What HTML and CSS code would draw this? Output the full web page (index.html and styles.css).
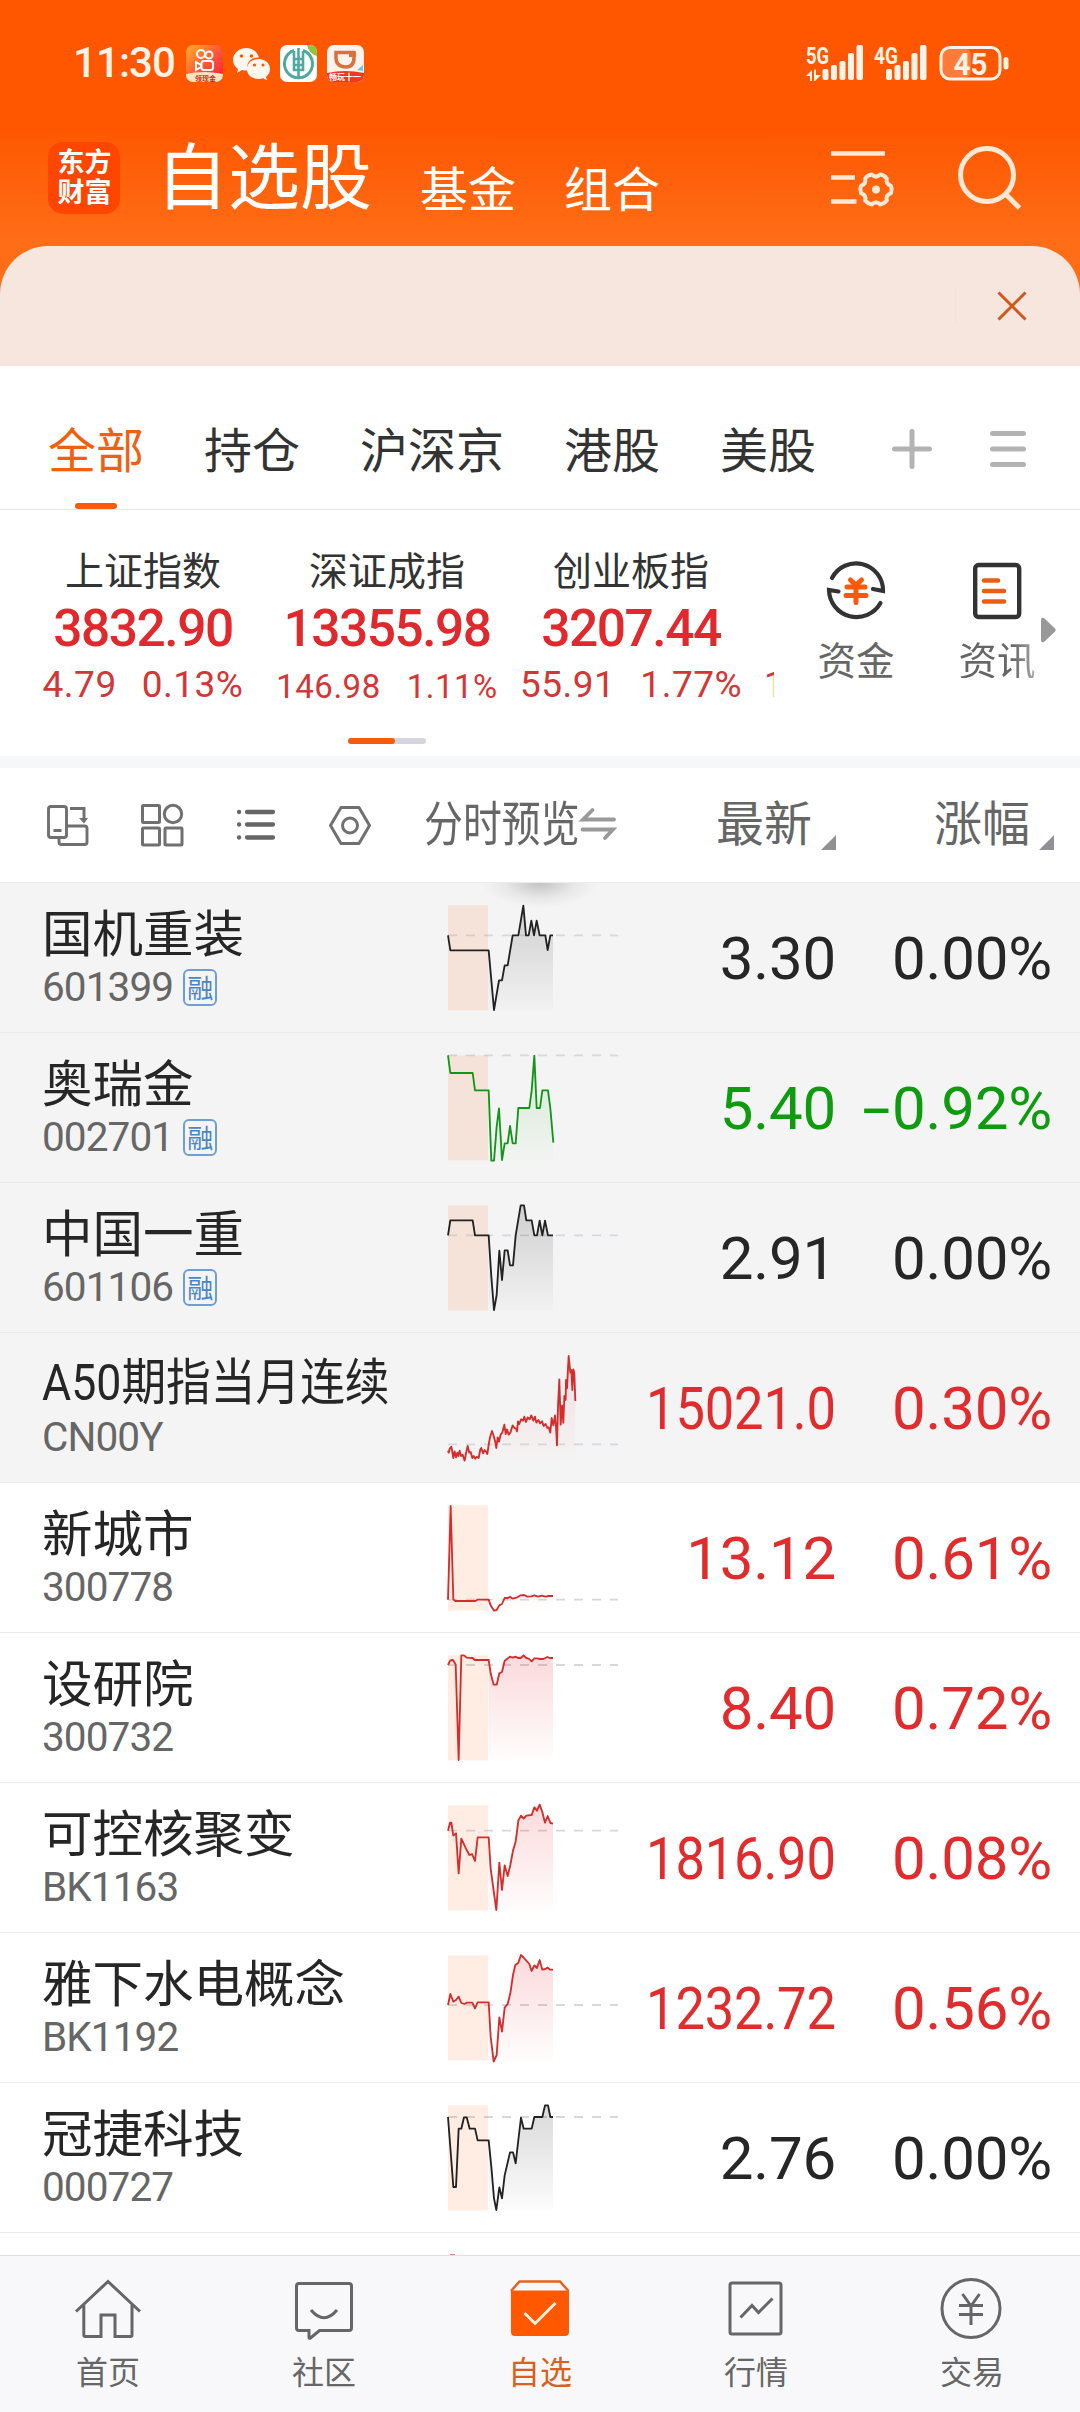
FILE: index.html
```html
<!DOCTYPE html>
<html lang="zh-CN">
<head>
<meta charset="utf-8">
<title>自选股</title>
<link rel="stylesheet" href="styles.css">
</head>
<body>
<svg class="defs" width="0" height="0" aria-hidden="true">
  <defs>
    <linearGradient id="gk" x1="0" y1="0" x2="0" y2="1"><stop offset="0" stop-color="#000" stop-opacity=".15"/><stop offset="1" stop-color="#000" stop-opacity=".01"/></linearGradient>
    <linearGradient id="gg" x1="0" y1="0" x2="0" y2="1"><stop offset="0" stop-color="#0a0" stop-opacity=".13"/><stop offset="1" stop-color="#0a0" stop-opacity=".01"/></linearGradient>
    <linearGradient id="gr" x1="0" y1="0" x2="0" y2="1"><stop offset="0" stop-color="#e8222a" stop-opacity=".17"/><stop offset="1" stop-color="#e8222a" stop-opacity=".01"/></linearGradient>
    <linearGradient id="ks" x1="0" y1="0" x2="1" y2="1"><stop offset="0" stop-color="#ffb02a"/><stop offset=".5" stop-color="#ff5a35"/><stop offset="1" stop-color="#ff1a40"/></linearGradient>
  </defs>
</svg>

<header class="top">
  <div class="status">
    <span class="time">11:30</span>
    <svg class="app" viewBox="0 0 37 37"><rect width="37" height="37" rx="7" fill="url(#ks)"/><g fill="none" stroke="#fff" stroke-width="2"><circle cx="15" cy="9" r="4"/><circle cx="23" cy="10" r="3.500"/><rect x="15.500" y="16" width="11.500" height="9" rx="2.500"/><path d="M15 20l-5-3v8l5-3z"/></g><path d="M0 29Q18 25 37 29V30A7 7 0 0 1 30 37H7A7 7 0 0 1 0 30Z" fill="#ffe2c0"/><text x="9" y="35.500" font-size="7" font-weight="bold" fill="#c33016">领现金</text></svg>
    <svg class="app" viewBox="0 0 37 37"><path d="M13 3C6 3 0 8 0 15c0 4 2 7 5 9l-1 4 5-3c2 .6 4 .7 6 .5-3-8 4-14 11-13C24 6 19 3 13 3z" fill="#fff6ee"/><path d="M25.500 14C19 14 14 18 14 24s5 10 11.500 10c1.500 0 3-.3 4.500-.8l4 2-1-3.500c2.500-2 4-4.500 4-7.500 0-6-5-10.200-11.500-10.200z" fill="#fff6ee"/><g fill="#ff5a00"><circle cx="8.500" cy="11" r="1.800"/><circle cx="18.500" cy="11" r="1.800"/><circle cx="21.500" cy="20" r="1.600"/><circle cx="30" cy="20" r="1.600"/></g></svg>
    <svg class="app" viewBox="0 0 37 37"><rect width="37" height="37" rx="7" fill="#fff"/><path d="M27 0h3a7 7 0 0 1 7 7v4Q29 9 27 0z" fill="#8cc63f"/><path d="M14 5.500A14 14 0 1 0 23 5.500" fill="none" stroke="#4fa9a0" stroke-width="3"/><path d="M18.500 3v30M14 6v8h9V6M14 15v10h9V15M14 20h9" fill="none" stroke="#4fa9a0" stroke-width="2.600"/></svg>
    <svg class="app" viewBox="0 0 37 37"><rect width="37" height="37" rx="7" fill="#fdf3ec"/><path d="M9 7.500h18v5c0 7-3 9.500-8 9.500-6 0-10-3-10-9z" fill="none" stroke="#d9713c" stroke-width="3.500"/><path d="M22 7h7v5h-7z" fill="#d9713c"/><path d="M30 25l6-5v6z" fill="#6fc3e4"/><path d="M0 28Q18 24 37 28V30A7 7 0 0 1 30 37H7A7 7 0 0 1 0 30Z" fill="#ee3a22"/><text x="2" y="35" font-size="8" font-weight="bold" fill="#fff">畅玩十一</text></svg>
    <svg class="signal" viewBox="0 0 204 38" width="204" height="38">
      <g fill="#fff3e8">
        <text class="net" x="0" y="18.500" textLength="23" lengthAdjust="spacingAndGlyphs">5G</text>
        <path d="M0 31l6-6v11h-2v-5zM8 24.500h2v5.500h5l-6 6h-1z"/>
        <rect x="16.500" y="24" width="6" height="11" rx="2"/><rect x="25" y="20" width="6" height="15" rx="2"/><rect x="33.500" y="16" width="6" height="19" rx="2"/><rect x="42" y="8" width="6" height="27" rx="2"/><rect x="50.500" y="0" width="6.500" height="35" rx="2"/>
        <text class="net" x="68" y="18.500" textLength="24" lengthAdjust="spacingAndGlyphs">4G</text>
        <rect x="80" y="24" width="6" height="11" rx="2"/><rect x="88.500" y="20" width="6" height="15" rx="2"/><rect x="97" y="16" width="6" height="19" rx="2"/><rect x="105.500" y="8" width="6" height="27" rx="2"/><rect x="114" y="0" width="6.500" height="35" rx="2"/>
        <rect x="135" y="3" width="30" height="30" rx="7" opacity=".24"/>
        <rect x="135" y="2.500" width="59" height="31.500" rx="9" fill="none" stroke="#fff3e8" stroke-width="3"/>
        <rect x="197.500" y="12" width="5" height="12.500" rx="2.500"/>
        <text class="batt" x="147.500" y="29.500" textLength="34" lengthAdjust="spacingAndGlyphs">45</text>
      </g>
    </svg>
  </div>
  <div class="titlebar">
    <div class="logo">东方<br>财富</div>
    <h1>自选股</h1>
    <span class="sub">基金</span>
    <span class="sub">组合</span>
    <svg class="filter" viewBox="0 0 64 64" width="64" height="64"><g fill="none" stroke="#ffe8d6" stroke-width="4.600"><path d="M1 8.500H55M1 32.500H25M1 56.500H26.500"/><path d="M61 40.800Q62.500 44.500 61 48.200Q55.500 50 56.800 55.600Q54.200 58.800 50.300 59.400Q46 55.500 41.700 59.400Q37.800 58.800 35.200 55.600Q36.500 50 31 48.200Q29.500 44.500 31 40.800Q36.500 39 35.200 33.400Q37.800 30.200 41.700 29.600Q46 33.500 50.300 29.600Q54.200 30.200 56.800 33.400Q55.500 39 61 40.800Z" stroke-linejoin="round" stroke-width="4"/></g><circle cx="46" cy="44.500" r="4" fill="#ffe8d6"/></svg>
    <svg class="search" viewBox="0 0 64 66" width="64" height="66"><g fill="none" stroke="#ffe8d6" stroke-width="5"><circle cx="29" cy="29" r="26.500"/><path d="M48 48.500L61.500 62"/></g></svg>
  </div>
</header>

<div class="banner"><i></i><svg viewBox="0 0 30 30" width="30" height="30"><path d="M1.500 1.500l27 27M28.500 1.500l-27 27" stroke="#d2571c" stroke-width="3"/></svg></div>

<nav class="tabs">
  <span class="on">全部</span><span>持仓</span><span>沪深京</span><span>港股</span><span>美股</span>
  <svg class="plus" viewBox="0 0 40 40" width="40" height="40"><path d="M2.500 20h35M20 2.500v35" stroke="#b3b3b3" stroke-width="5" stroke-linecap="round"/></svg>
  <svg class="menu" viewBox="0 0 36 40" width="36" height="40"><path d="M2.500 4.500h31M2.500 20h31M2.500 35.500h31" stroke="#b3b3b3" stroke-width="5" stroke-linecap="round"/></svg>
</nav>

<section class="market">
  <div class="indices">
    <div class="idx"><b>上证指数</b><strong>3832.90</strong><p><span>4.79</span><span>0.13%</span></p></div>
    <div class="idx small"><b>深证成指</b><strong>13355.98</strong><p><span>146.98</span><span>1.11%</span></p></div>
    <div class="idx"><b>创业板指</b><strong>3207.44</strong><p><span>55.91</span><span>1.77%</span></p></div>
    <div class="idx next"><b></b><strong></strong><p><span>1</span></p></div>
  </div>
  <div class="tool">
    <svg viewBox="0 0 60 62" width="60" height="62"><g fill="none" stroke="#333" stroke-width="4.200" stroke-linejoin="miter" stroke-linecap="round"><path d="M6 18A27 27 0 0 1 57 31L47 29"/><path d="M12.500 31.500L3 30A27.500 27.500 0 0 0 54.500 43"/></g><g stroke="#f8590a" stroke-width="5" stroke-linecap="round" fill="none"><path d="M24.500 20l5.500 5 5.500-5M21 27h18M20 35.500h20M30 26v16.500"/></g></svg>
    <span>资金</span>
  </div>
  <div class="tool info">
    <svg viewBox="0 0 60 62" width="60" height="62"><rect x="8.200" y="5" width="44" height="52" rx="3.500" fill="none" stroke="#333" stroke-width="4.400"/><path d="M17 20.500h14M17 31h20M17 41.500h20" stroke="#ec5d14" stroke-width="4.600" stroke-linecap="round"/></svg>
    <span>资讯</span>
  </div>
  <svg class="more" viewBox="0 0 15 26" width="15" height="26"><path d="M0 3Q0 0 3 1L14 11.500Q15.500 13 14 14.500L3 25Q0 26 0 23Z" fill="#999"/></svg>
  <div class="pager"><i></i></div>
</section>

<div class="band"></div>

<div class="thead">
  <svg class="t1" viewBox="0 0 42 42" width="42" height="42"><g fill="none" stroke="#707070" stroke-width="2.900"><rect x="2.500" y="2.500" width="18" height="31" rx="2.500"/><path d="M7.500 26.500h8M13 34v4q0 2.500 2.500 2.500h23q2.500 0 2.500-2.500V24.500q0-2.500-2.500-2.500H21M24 4.500h14v12"/></g><path d="M33 14h9L38 19.500z" fill="#707070"/></svg>
  <svg class="t2" viewBox="0 0 42 42" width="42" height="42"><g fill="none" stroke="#707070" stroke-width="3"><rect x="1.500" y="1.500" width="17" height="17" rx="1"/><ellipse cx="32" cy="10" rx="8.700" ry="8.700"/><rect x="1.500" y="24" width="17" height="17" rx="1"/><rect x="24" y="24" width="17" height="17" rx="1"/></g></svg>
  <svg class="t3" viewBox="0 0 42 42" width="42" height="42"><path d="M12 8h26M12 20.500h26M12 33.500h26M4 8h.1M4 20.500h.1M4 33.500h.1" stroke="#666" stroke-width="4.300" stroke-linecap="round"/></svg>
  <svg class="t4" viewBox="0 0 42 42" width="42" height="42"><g fill="none" stroke="#707070" stroke-width="3" stroke-linejoin="round"><path d="M12 3.500h18L40.500 21.500 30 39.500H12L1.500 21.500z"/><circle cx="21" cy="21.500" r="7.500"/></g></svg>
  <span class="preview"><em>分时预览</em></span>
  <svg class="swap" viewBox="0 0 36 34" width="36" height="34"><path d="M12.500 3L3 12.500h31M2.500 22.500H33L25 31" fill="none" stroke="#999" stroke-width="3.800" stroke-linecap="round"/></svg>
  <span class="col c1">最新<i></i></span>
  <span class="col c2">涨幅<i></i></span>
</div>

<main class="list">
  <div class="row pin first">
    <div class="name"><b>国机重装</b><p>601399<i>融</i></p></div>
    <svg class="chart k" viewBox="0 9 660 447"><path class="dash" d="M84 166H594"/><rect class="am" x="84" y="76" width="120" height="315"/><path class="fill" d="M206 211L222 390 237 301 246 301 254 256 263 256 278 166 295 166 310 77 318 166 326 166 334 122 342 166 350 122 359 166 376 166 383 210 391 166 399 166V391H206Z"/><polyline points="84,166 91,211 206,211 222,390 237,301 246,301 254,256 263,256 278,166 295,166 310,77 318,166 326,166 334,122 342,166 350,122 359,166 376,166 383,210 391,166 399,166"/></svg>
    <div class="price">3.30</div><div class="pct">0.00%</div>
  </div>
  <div class="row pin down">
    <div class="name"><b>奥瑞金</b><p>002701<i>融</i></p></div>
    <svg class="chart g" viewBox="0 459 660 447"><path class="dash" d="M84 526H594"/><rect class="am" x="84" y="526" width="120" height="315"/><path class="fill" d="M206 631L214 842 222 842 230 740 237 685 246 840 254 790 263 790 270 738 278 790 287 790 295 684 328 684 335 632 343 527 350 684 360 684 367 631 384 631 391 685 399 788V841H206Z"/><polyline points="84,526 91,579 158,579 165,631 206,631 214,842 222,842 230,740 237,685 246,840 254,790 263,790 270,738 278,790 287,790 295,684 328,684 335,632 343,527 350,684 360,684 367,631 384,631 391,685 400,788"/></svg>
    <div class="price">5.40</div><div class="pct"><span class="minus">-</span>0.92%</div>
  </div>
  <div class="row pin">
    <div class="name"><b>中国一重</b><p>601106<i>融</i></p></div>
    <svg class="chart k" viewBox="0 909 660 447"><path class="dash" d="M84 1066H594"/><rect class="am" x="84" y="976" width="120" height="315"/><path class="fill" d="M206 1066L222 1290 230 1245 238 1112 246 1200 254 1111 263 1111 270 1156 279 1156 287 1066 302 976 312 976 319 1021 335 1021 343 1066 351 1066 359 1022 367 1066 375 1022 384 1066 399 1066V1291H206Z"/><polyline points="84,1066 91,1021 158,1021 165,1066 206,1066 214,1190 222,1290 230,1245 238,1112 246,1200 254,1111 263,1111 270,1156 279,1156 287,1066 302,976 312,976 319,1021 335,1021 343,1066 351,1066 359,1022 367,1066 375,1022 384,1066 399,1066"/></svg>
    <div class="price">2.91</div><div class="pct">0.00%</div>
  </div>
  <div class="row pin up">
    <div class="name long"><b>A50期指当月连续</b><p>CN00Y</p></div>
    <svg class="chart r" viewBox="0 9 660 447"><path class="dash" d="M84 343H594"/><path class="fill faint" d="M84 362L94 352 102 380 118 365 133 390 143 350 157 382 172 384 184 354 203 368 217 303 229 350 253 288 262 312 278 288 290 300 305 265 335 260 350 275 368 274 391 305 396 265 411 345 418 148 426 270 446 78 456 180 461 118 466 213V391H84Z"/><polyline points="84,362 86,368 89,356 94,350 97,366 100,384 104,364 108,382 112,368 115,378 119,362 123,378 128,374 134,392 138,370 143,348 148,368 152,366 157,384 161,378 166,386 170,380 176,384 181,358 184,354 189,370 194,360 199,366 202,372 206,345 210,322 216,303 221,318 225,332 229,354 233,322 237,335 242,314 247,308 253,284 257,312 261,298 266,314 271,308 278,286 283,294 288,296 291,304 294,274 298,282 303,268 309,272 313,260 318,276 323,262 329,268 334,256 340,272 345,260 349,278 355,270 360,280 366,274 371,288 377,282 382,294 386,292 391,308 395,264 400,286 405,256 408,290 411,346 414,230 418,148 422,284 426,226 430,278 433,198 437,210 438,150 441,175 446,78 451,128 454,120 457,180 460,118 463,130 466,213"/></svg>
    <div class="price wide"><span>15021.0</span></div><div class="pct">0.30%</div>
  </div>
  <div class="row up">
    <div class="name"><b>新城市</b><p>300778</p></div>
    <svg class="chart r" viewBox="0 459 660 447"><path class="dash" d="M84 809H594"/><rect class="am" x="84" y="526" width="120" height="315"/><path class="fill pale" d="M206 809L222 841 230 838 254 805 310 795 399 798V841H206Z"/><polyline points="84,809 92,528 100,808 106,813 166,813 172,809 206,809 212,826 222,842 230,840 238,826 246,822 254,804 264,804 270,800 278,806 292,802 302,796 312,795 322,800 334,799 343,796 354,800 366,797 376,800 386,798 399,798"/></svg>
    <div class="price">13.12</div><div class="pct">0.61%</div>
  </div>
  <div class="row up">
    <div class="name"><b>设研院</b><p>300732</p></div>
    <svg class="chart r" viewBox="0 909 660 447"><path class="dash" d="M84 1005H594"/><rect class="am" x="84" y="976" width="120" height="315"/><path class="fill" d="M206 990L212 1030 222 1064 230 1064 238 1030 246 1026 254 992 270 982 310 976 334 993 345 984 399 984V1291H206Z"/><polyline points="84,1005 91,991 99,990 107,1004 116,1290 124,976 132,976 140,983 158,984 164,990 206,990 212,1030 221,1064 230,1064 238,1030 246,1026 254,992 262,986 270,980 278,983 286,980 294,984 302,984 311,976 319,984 326,986 335,994 343,985 351,985 360,987 370,987 382,981 390,984 399,984"/></svg>
    <div class="price">8.40</div><div class="pct">0.72%</div>
  </div>
  <div class="row up">
    <div class="name"><b>可控核聚变</b><p>BK1163</p></div>
    <svg class="chart r" viewBox="0 9 660 447"><path class="dash" d="M84 152H594"/><rect class="am" x="84" y="76" width="120" height="315"/><path class="fill" d="M206 172L212 265 229 390 238 248 246 330 254 256 263 290 287 185 295 122 303 107 335 105 343 82 359 74 375 128 383 108 399 131V391H206Z"/><polyline points="84,152 90,128 94,128 100,167 108,160 116,280 124,176 138,206 148,225 156,222 165,243 173,172 206,172 212,265 222,340 229,390 238,248 246,330 254,256 263,288 271,255 279,212 287,185 295,122 303,107 311,116 319,107 335,105 343,82 351,92 359,74 367,96 375,128 383,108 391,129 399,131"/></svg>
    <div class="price wide"><span>1816.90</span></div><div class="pct">0.08%</div>
  </div>
  <div class="row up">
    <div class="name"><b>雅下水电概念</b><p>BK1192</p></div>
    <svg class="chart r" viewBox="0 459 660 447"><path class="dash" d="M84 675H594"/><rect class="am" x="84" y="526" width="120" height="315"/><path class="fill" d="M206 667L212 770 221 844 230 825 238 712 246 755 254 683 263 672 271 640 279 585 286 555 295 548 303 525 328 552 335 573 359 540 367 568 399 569V841H206Z"/><polyline points="84,675 91,642 100,665 108,660 116,650 124,669 133,672 141,668 157,668 165,685 173,667 206,667 212,770 221,845 230,825 238,712 246,755 254,683 263,672 271,640 279,585 286,555 295,548 303,525 311,533 328,552 335,573 343,556 351,564 359,540 367,569 376,567 383,563 391,569 399,569"/></svg>
    <div class="price wide"><span>1232.72</span></div><div class="pct">0.56%</div>
  </div>
  <div class="row">
    <div class="name"><b>冠捷科技</b><p>000727</p></div>
    <svg class="chart k" viewBox="0 909 660 447"><path class="dash" d="M84 1011H594"/><rect class="am" x="84" y="976" width="120" height="315"/><path class="fill" d="M206 1081L214 1160 222 1255 229 1290 238 1222 246 1255 254 1186 270 1117 279 1117 287 1150 295 1080 303 1013 311 1046 335 1046 343 1011 367 1011 375 976 384 976 391 1011 399 1011V1291H206Z"/><polyline points="84,1011 100,1221 108,1221 116,1046 124,1046 132,1012 140,1012 149,1046 165,1046 173,1081 206,1081 214,1160 222,1255 229,1290 238,1222 246,1255 254,1186 270,1117 279,1117 287,1150 295,1080 303,1013 311,1046 335,1046 343,1011 367,1011 375,976 384,976 391,1011 399,1011"/></svg>
    <div class="price">2.76</div><div class="pct">0.00%</div>
  </div>
  <div class="peek"><i></i></div>
</main>

<footer class="nav">
  <a><svg viewBox="0 0 66 62" width="66" height="62"><g fill="none" stroke="#666" stroke-width="3"><path d="M1 34.500L33 4.500 65 34.500M8.800 28V58q0 1.500 1.500 1.500H26V38H40V59.500H55.500q1.500 0 1.500-1.500V28"/></g></svg>首页</a>
  <a><svg viewBox="0 0 66 62" width="66" height="62"><g fill="none" stroke="#666" stroke-width="3"><path d="M8 6.500H58q2.500 0 2.500 2.500V51q0 2.500-2.500 2.500H28.500L19.500 61q-1.500 1-1.500-1V53.500H8Q5.500 53.500 5.500 51V9Q5.500 6.500 8 6.500Z"/><path d="M20 33Q33 48.500 46 33"/></g></svg>社区</a>
  <a class="on"><svg viewBox="0 0 66 62" width="66" height="62"><path d="M4 14L12.500 4.500H53L61.500 14" fill="none" stroke="#e4621f" stroke-width="2.500"/><path d="M4 13.500H62V55q0 4-4 4H8q-4 0-4-4z" fill="#ff5800"/><path d="M17.500 36L28 46.500 48.500 26" fill="none" stroke="#ffeedd" stroke-width="3"/></svg>自选</a>
  <a><svg viewBox="0 0 66 62" width="66" height="62"><g fill="none" stroke="#666" stroke-width="3"><rect x="7" y="6" width="51" height="51" rx="2"/><path d="M17.500 40.500L29 28.500 35.500 35.500 49.500 21.500"/></g></svg>行情</a>
  <a><svg viewBox="0 0 66 62" width="66" height="62"><g fill="none" stroke="#666" stroke-width="3"><circle cx="32" cy="31.500" r="29"/><path d="M23.500 17l8.500 12 8.500-12M20 28.500H44M20 37.500H44M32 28V48"/></g></svg>交易</a>
</footer>
</body>
</html>
```
FILE: styles.css
```css
* { box-sizing: border-box; margin: 0; padding: 0; }
body {
  width: 1080px; height: 2412px; overflow: hidden; background: #fff; color: #333;
  font-family: "Noto Sans CJK SC", "Noto Sans", sans-serif;
  display: flex; flex-direction: column;
}
svg { display: block; flex: none; overflow: visible; }
i, em { font-style: normal; }
.defs { position: absolute; }

.top { height: 294px; flex: none; background: linear-gradient(#ff5600 0, #ff5600 124px, #ff6e17 244px, #ff6e17 100%); color: #fff; }
.status { height: 126px; padding: 45px 70px 0 73px; display: flex; align-items: flex-start; }
.time { width: 113px; font: 500 42px/36px Roboto, sans-serif; letter-spacing: -.9px; color: #fff3e8; }
.app { width: 37px; height: 37px; margin-right: 10px; }
.signal { margin-left: auto; }
.net { font: 700 24px Roboto, sans-serif; }
.batt { font: 700 32px Roboto, sans-serif; }
.titlebar { height: 120px; padding-left: 48px; display: flex; align-items: flex-start; }
.logo {
  width: 72px; height: 72px; margin-top: 16px; padding: 4px 0 0 1px; border-radius: 15px; background: #ff4600;
  text-align: center; font-size: 27px; font-weight: 700; line-height: 30px;
}
h1 { width: 216px; margin: 10px 0 0 36px; font-size: 72px; font-weight: 400; line-height: 72px; white-space: nowrap; }
.sub { width: 96px; margin: 34px 0 0 48px; font-size: 48px; line-height: 52px; white-space: nowrap; }
.filter { margin: 19px 0 0 170px; }
.search { margin: 20px 0 0 64px; }

.banner {
  height: 120px; flex: none; margin-top: -48px; border-radius: 48px 48px 0 0; background: #f6e6de;
  display: flex; align-items: center; justify-content: flex-end; padding-right: 53px;
}
.banner i { width: 1px; height: 36px; margin-right: 41px; background: #f3e1da; }

.tabs { height: 144px; flex: none; padding-left: 48px; border-bottom: 1px solid #e4e4e4; display: flex; }
.tabs span { height: 143px; margin-right: 60px; padding-top: 56px; font-size: 48px; line-height: 50px; white-space: nowrap; }
.tabs .on { color: #f0600f; display: flex; flex-direction: column; align-items: center; }
.tabs .on::after { content: ""; width: 42px; height: 6px; margin-top: 31px; border-radius: 3px; background: #fa5a0a; }
.plus { margin: 63px 0 0 16px; }
.menu { margin: 63px 0 0 58px; }

.market { height: 246px; flex: none; position: relative; display: flex; }
.indices { width: 774px; padding-left: 21px; display: flex; overflow: hidden; flex: none; }
.idx { width: 244px; flex: none; display: flex; flex-direction: column; align-items: center; white-space: nowrap; }
.idx b { height: 40px; margin-top: 38px; font-size: 39px; font-weight: 400; line-height: 40px; }
.idx strong { height: 48px; margin-top: 17px; font: 500 51.500px/48px Roboto, sans-serif; letter-spacing: -1.500px; color: #e0292c; }
.idx p { height: 36px; margin-top: 14px; display: flex; gap: 25px; font: 400 37px/36px Roboto, sans-serif; letter-spacing: .5px; color: #d23636; }
.idx.small p { font-size: 33px; line-height: 39px; gap: 26px; letter-spacing: .5px; }
.idx.next { align-items: flex-start; margin-left: 11px; }
.tool { width: 96px; margin: 50px 0 0 34px; display: flex; flex-direction: column; align-items: center; flex: none; }
.tool span { margin-top: 16px; font-size: 38.500px; line-height: 40px; color: #666; white-space: nowrap; }
.tool.info { margin-left: 45px; }
.tool.info span { background: linear-gradient(90deg, #666 70%, #aaa); -webkit-background-clip: text; background-clip: text; color: transparent; }
.more { margin: 107px 0 0 -4px; }
.pager { position: absolute; left: 348px; top: 228px; width: 78px; height: 6px; border-radius: 3px; background: #d3d6dc; }
.pager i { display: block; width: 47px; height: 6px; border-radius: 3px; background: #fa5a0a; }
.band { height: 12px; flex: none; background: #f6f7f9; }

.thead { height: 115px; flex: none; padding-left: 46px; border-bottom: 1px solid #ebebeb; display: flex; color: #666; }
.thead > svg { margin-top: 36px; }
.thead .t2 { margin-left: 53px; }
.thead .t3 { margin-left: 52px; }
.thead .t4 { margin-left: 52px; }
.preview { width: 156px; margin: 27px 0 0 53px; font-size: 48px; line-height: 50px; white-space: nowrap; }
.preview em { display: block; width: 192px; transform: scaleX(.81); transform-origin: 0 0; }
.thead .swap { margin: 39px 0 0 0; }
.col { margin-top: 27px; font-size: 48px; line-height: 50px; display: flex; white-space: nowrap; }
.col i { width: 15px; height: 15px; margin: 40px 0 0 9px; background: #909096; clip-path: polygon(100% 0, 100% 100%, 0 100%); }
.c1 { margin-left: 100px; }
.c2 { margin-left: 98px; }

.list { height: 1372px; flex: none; overflow: hidden; }
.row { height: 150px; border-bottom: 1px solid #ebebeb; display: flex; color: #262626; }
.pin { background: #f4f4f4; }
.first { background: radial-gradient(ellipse 58px 25px at 540px 0, rgba(0,0,0,.2), rgba(0,0,0,.05) 60%, transparent) #f4f4f4; }
.name { width: 420px; padding: 21px 0 0 42px; flex: none; white-space: nowrap; }
.name b { display: block; height: 52px; font-size: 50.500px; font-weight: 400; line-height: 52px; color: #262626; }
.name p { height: 42px; margin-top: 10px; display: flex; font: 400 40.500px/42px Roboto, sans-serif; letter-spacing: -.9px; color: #666; }
.name p i {
  width: 34px; height: 37px; margin: 3px 0 0 10px; border: 2px solid #6d9fd3; border-radius: 6px; text-align: center;
  font: 400 26px/32px "Noto Sans CJK SC", sans-serif; letter-spacing: 0; color: #4886c8;
}
.long b { padding-top: 3px; font-family: Roboto, "Noto Sans CJK SC", sans-serif; transform: scaleX(.885); transform-origin: 0 0; }
.chart { width: 220px; height: 149px; }
.price, .pct { font: 400 60px/152px Roboto, sans-serif; text-align: right; white-space: nowrap; letter-spacing: -.2px; }
.price { width: 196px; }
.pct { width: 216px; }
.wide { display: flex; justify-content: flex-end; }
.wide span { transform: scaleX(.875); transform-origin: 100% 50%; }
.minus { display: inline-block; transform: scaleX(1.700); margin-right: 8px; }
.up .price, .up .pct { color: #e02c2c; }
.down .price, .down .pct { color: #0f9b0f; }
.chart polyline { fill: none; stroke-width: 5.500; stroke-linejoin: round; }
.dash { stroke: #d5d8dd; stroke-width: 5.500; stroke-dasharray: 27 27; fill: none; }
.am { fill: #ff5a00; opacity: .11; }
.k polyline { stroke: #222; } .k .fill { fill: url(#gk); }
.g polyline { stroke: #12961a; } .g .fill { fill: url(#gg); }
.r polyline { stroke: #d52c2c; } .r .fill { fill: url(#gr); }
.r .pale { opacity: .2; }
.r .faint { opacity: .6; }
.peek { height: 22px; padding: 21px 0 0 450px; }
.peek i { display: block; width: 5px; height: 1px; background: #e08a8a; }

.nav { height: 157px; flex: none; border-top: 1px solid #e0e0e2; background: #f8f8fa; display: flex; }
.nav a { width: 216px; padding-top: 21px; display: flex; flex-direction: column; align-items: center; font-size: 32px; line-height: 34px; color: #666; }
.nav svg { margin-bottom: 14px; }
.nav .on { color: #d9601f; }
```
